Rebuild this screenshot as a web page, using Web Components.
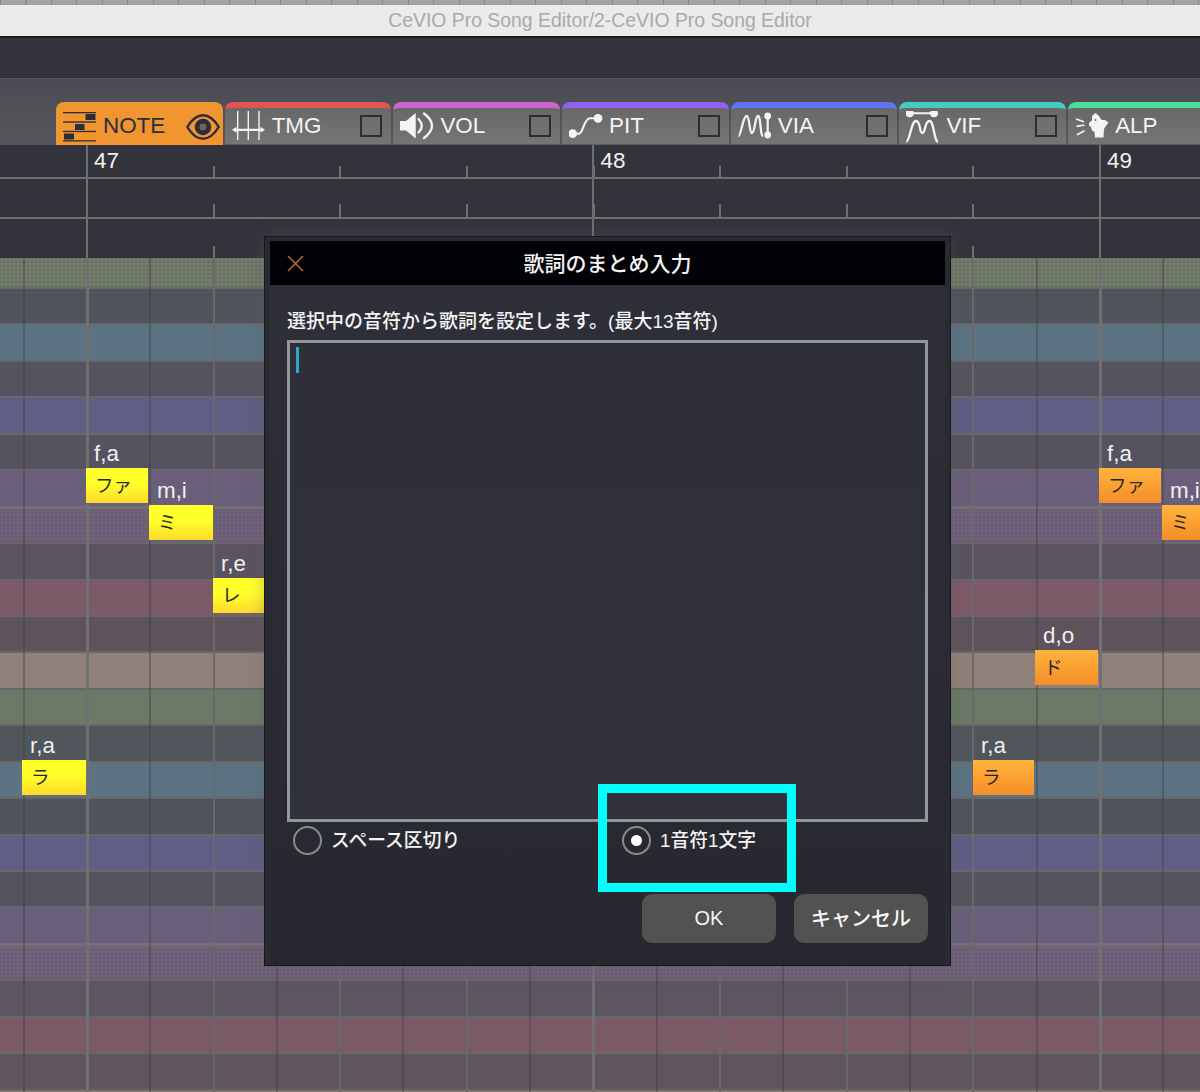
<!DOCTYPE html>
<html lang="ja">
<head>
<meta charset="utf-8">
<title>CeVIO Pro Song Editor</title>
<style>
html,body{margin:0;padding:0;background:#33333b}
</style>
</head>
<body>
<cv-app>
  <cv-titlebar slot="title">CeVIO Pro Song Editor/2-CeVIO Pro Song Editor</cv-titlebar>
  <cv-toolbar slot="toolbar">
    <cv-tab active label="NOTE">
      <svg slot="icon" width="34" height="32" viewBox="0 0 34 32" fill="#2c2c3c" stroke="none">
        <rect x="0" y="0" width="33" height="1.3"/><rect x="0" y="9.4" width="33" height="1.3"/><rect x="0" y="18.8" width="33" height="1.3"/><rect x="0" y="28.2" width="33" height="1.3"/>
        <rect x="22.5" y="2" width="10" height="6"/><rect x="12" y="12" width="9.5" height="6"/><rect x="1" y="21.5" width="10" height="6"/>
      </svg>
      <svg slot="end" width="34" height="26" viewBox="0 0 34 26">
        <path d="M1.3 13C7 3.5 13 1.3 17 1.3S27 3.5 32.7 13C27 22.5 21 24.7 17 24.7S7 22.5 1.3 13Z" fill="none" stroke="#2c2c3c" stroke-width="2.4"/>
        <circle cx="17" cy="13" r="5.8" fill="none" stroke="#2c2c3c" stroke-width="5"/>
        <circle cx="17" cy="13" r="3.2" fill="#6b6460"/>
      </svg>
    </cv-tab>
    <cv-tab color="#e25555" label="TMG">
      <svg slot="icon" width="34" height="32" viewBox="0 0 34 32" fill="#f4f4f4" stroke="#f4f4f4">
        <path d="M5.7 0V29M16.3 0V29M27 0V29" fill="none" stroke-width="1.4"/>
        <path d="M3 18.8H30" fill="none" stroke-width="2.2"/>
        <path d="M0 18.8L4.5 15.8V21.8ZM33 18.8L28.5 15.8V21.8Z" stroke="none"/>
      </svg>
    </cv-tab>
    <cv-tab color="#cc66cc" label="VOL">
      <svg slot="icon" width="34" height="32" viewBox="0 0 34 32" fill="none" stroke="#f4f4f4">
        <path d="M0 10H6L15.7 2V27.5L6 19.5H0Z" fill="#f4f4f4" stroke="none"/>
        <path d="M18.5 8Q25 14.7 18.5 21.5" stroke-width="2.4" stroke-linecap="round"/>
        <path d="M24 2.5Q40 14.7 24 27" stroke-width="2.4" stroke-linecap="round"/>
      </svg>
    </cv-tab>
    <cv-tab color="#9060f0" label="PIT">
      <svg slot="icon" width="34" height="32" viewBox="0 0 34 32" fill="#f4f4f4" stroke="none">
        <path d="M3.7 22.7H10C14 22.7 15 7.3 21 7.3H29" fill="none" stroke="#f4f4f4" stroke-width="2.1"/>
        <circle cx="3.7" cy="22.7" r="4.4"/><circle cx="29" cy="7.3" r="4.4"/>
      </svg>
    </cv-tab>
    <cv-tab color="#5f75f5" label="VIA">
      <svg slot="icon" width="34" height="32" viewBox="0 0 34 32" fill="#f4f4f4" stroke="none">
        <path d="M0.5 25C3 25 5 5 8.5 5C12 5 11 22 14 22C17 22 17 5 20 5C23 5 22 25 25 25" fill="none" stroke="#f4f4f4" stroke-width="2.3"/>
        <path d="M29.7 5V24" fill="none" stroke="#f4f4f4" stroke-width="2.2"/>
        <circle cx="29.7" cy="5" r="3.4"/><circle cx="29.7" cy="24" r="3.4"/>
      </svg>
    </cv-tab>
    <cv-tab color="#44ccc4" label="VIF">
      <svg slot="icon" width="34" height="32" viewBox="0 0 34 32" fill="#f4f4f4" stroke="none">
        <path d="M3.7 2.3H28" fill="none" stroke="#f4f4f4" stroke-width="2.1"/>
        <circle cx="3.7" cy="2.3" r="4"/><circle cx="28" cy="2.3" r="4"/>
        <path d="M0.3 30.5C4 30.5 5 10 10 10C15 10 13 22 16.3 22C20 22 18 10 23.7 10C28 10 28 30.5 32 30.5" fill="none" stroke="#f4f4f4" stroke-width="2.3"/>
      </svg>
    </cv-tab>
    <cv-tab color="#48dd99" label="ALP" nobox>
      <svg slot="icon" width="34" height="32" viewBox="0 0 34 32" fill="#f4f4f4" stroke="none">
        <path d="M1 8L9 10.7M1.5 15.3L9.5 14M2 23.7L9.5 19.7" fill="none" stroke="#f4f4f4" stroke-width="1.7"/>
        <path d="M14 12L17 9.5L17 5L20.5 2L24 5L26.5 9L30 9L33.5 11.5L30.5 15.5L29 18L28.5 26.5L20 26.5L19.5 21L17 19.5L16 16L14 14.5Z"/>
        <circle cx="20.5" cy="9" r="1" fill="#6f6f6f"/>
      </svg>
    </cv-tab>
  </cv-toolbar>
  <cv-ruler slot="ruler" bars="47,48,49"></cv-ruler>
  <cv-roll slot="roll">
    <cv-note x="86" y="468" w="62" lyric="ファ" phon="f,a" tone="yellow"></cv-note>
    <cv-note x="149" y="505" w="64" lyric="ミ" phon="m,i" tone="yellow"></cv-note>
    <cv-note x="213" y="578" w="63" lyric="レ" phon="r,e" tone="yellow"></cv-note>
    <cv-note x="22" y="760" w="64" lyric="ラ" phon="r,a" tone="yellow"></cv-note>
    <cv-note x="1035" y="650" w="63" lyric="ド" phon="d,o" tone="orange"></cv-note>
    <cv-note x="973" y="760" w="61" lyric="ラ" phon="r,a" tone="orange"></cv-note>
    <cv-note x="1099" y="468" w="62" lyric="ファ" phon="f,a" tone="orange"></cv-note>
    <cv-note x="1162" y="505" w="63" lyric="ミ" phon="m,i" tone="orange"></cv-note>
  </cv-roll>
  <cv-dialog slot="dialog" heading="歌詞のまとめ入力">
    <cv-lyric-field label="選択中の音符から歌詞を設定します。(最大13音符)"></cv-lyric-field>
    <cv-radio-row>
      <cv-radio>スペース区切り</cv-radio>
      <cv-radio checked>1音符1文字</cv-radio>
    </cv-radio-row>
    <cv-actions>
      <cv-button>OK</cv-button>
      <cv-button label-up>キャンセル</cv-button>
    </cv-actions>
  </cv-dialog>
  <cv-highlight slot="dialog"></cv-highlight>
</cv-app>

<script>
const SANS = '"Liberation Sans","Noto Sans CJK JP",sans-serif';
class Base extends HTMLElement {
  constructor(){ super(); this.attachShadow({mode:'open'}); }
  render(html){ this.shadowRoot.innerHTML = html; }
}
customElements.define('cv-app', class extends Base {
  connectedCallback(){ this.render(`<style>
    :host{display:flex;flex-direction:column;position:relative;width:1200px;height:1092px;overflow:hidden;background:#33333b;font-family:${SANS}}
    .strip{height:5px;flex:none;background:repeating-linear-gradient(90deg,#8b8b8b 0 1px,#a3a3a3 1px 25.5px)}
    .band{height:40px;flex:none;background:#33333b}
  </style>
  <div class="strip"></div>
  <slot name="title"></slot>
  <div class="band"></div>
  <slot name="toolbar"></slot>
  <slot name="ruler"></slot>
  <slot name="roll"></slot>
  <slot name="dialog"></slot>`); }
});
customElements.define('cv-titlebar', class extends Base {
  connectedCallback(){ this.render(`<style>
    :host{display:flex;flex:none;align-items:center;justify-content:center;box-sizing:border-box;height:33px;padding-top:0;background:#ebebeb;border-bottom:2px solid #1c1c20;color:#a9a9a9;font:19.4px ${SANS}}
  </style><slot></slot>`); }
});
customElements.define('cv-toolbar', class extends Base {
  connectedCallback(){ this.render(`<style>
    :host{display:flex;flex:none;box-sizing:border-box;height:67px;padding:23px 0 0 56px;gap:2px;overflow:hidden;background:linear-gradient(#4b4c53,#56575d);border-top:1px solid #54555c}
  </style><slot></slot>`); }
});
customElements.define('cv-tab', class extends Base {
  connectedCallback(){
    const active=this.hasAttribute('active'), color=this.getAttribute('color')||'#f0952f';
    const nobox=this.hasAttribute('nobox');
    this.render(`<style>
      :host{display:flex;flex:none;flex-direction:column;box-sizing:border-box;width:166.7px;height:44px;border-radius:8px 8px 0 0;overflow:hidden;background:${active?'#f0952f':'linear-gradient(#686868,#757575)'};border-top:${active?'0':'6px solid '+color};color:${active?'#2c2c3c':'#f4f4f4'};${active?'':'border-bottom:2px solid #5d5d60'}}
      .in{flex:1;min-height:0;display:flex;align-items:center;padding-left:7px;font:22.4px ${SANS}}
      .ic{flex:none;width:34px;height:32px;display:block;margin-right:6px;${active?'margin-top:7px;margin-bottom:-1px':'margin-top:1px'}}
      .lb{flex:1;white-space:nowrap;${active?'margin-top:4px':'margin-top:-1px'}}
      .box{flex:none;box-sizing:border-box;width:22px;height:22px;margin-right:9px;border:2px solid #2c2c34;background:#707070}
      .end{flex:none;margin-right:3px;display:flex;margin-top:6px}
    </style>
    <div class="in">
      <div class="ic"><slot name="icon"></slot></div>
      <span class="lb">${this.getAttribute('label')}</span>
      ${active?'<span class="end"><slot name="end"></slot></span>':(nobox?'':'<span class="box"></span>')}
    </div>`);
  }
});
const LINE='#6f6f70';
const majors=(c,w)=>`repeating-linear-gradient(90deg,${c} 86px,${c} ${86+w}px,transparent ${86+w}px,transparent 592.5px)`;
const beats=(c,w)=>`repeating-linear-gradient(90deg,${c} 86.2px,${c} ${86.2+w}px,transparent ${86.2+w}px,transparent 212.8px)`;
customElements.define('cv-ruler', class extends Base {
  connectedCallback(){
    const bars=this.getAttribute('bars').split(',');
    this.render(`<style>
      :host{display:block;flex:none;height:113px;background:#33333b;color:#f2f2f2}
      .r{box-sizing:border-box;border-bottom:2px solid ${LINE};background-image:${majors(LINE,2)},${beats(LINE,2)};background-repeat:no-repeat;background-position:0 0,0 100%}
      .a{height:34px;display:grid;grid-template-columns:repeat(3,506.5px);padding-left:87px;font:22.4px ${SANS};background-size:100% 100%,100% 11px}
      .a span{padding:3px 0 0 7px;line-height:26px}
      .b{height:40px;background-size:100% 100%,100% 13px}
      .c{height:39px;border-bottom:0;background-size:100% 100%,100% 12px}
    </style>
    <div class="r a">${bars.map(b=>`<span>${b}</span>`).join('')}</div>
    <div class="r b"></div>
    <div class="r c"></div>`);
  }
});
const ROWS=['#6b7563','#50565c','#5b7382','#53545f','#5f5e84','#55535f','#6a5f7a','#6a5e78','#5a5360','#7b5a67','#5e535a','#90807a','#6a7a66','#50565c','#5b7382','#50525c','#5f5e84','#55535f','#695f7a','#6a5e78','#5d5660','#7b5a67','#5e555d','#90807a'];
const DOTS={0:'rgba(220,230,200,.13)',7:'rgba(210,150,120,.13)',19:'rgba(210,150,120,.13)',1:'rgba(30,40,50,.1)',9:'rgba(200,90,110,.09)'};
customElements.define('cv-roll', class extends Base {
  connectedCallback(){
    this.render(`<style>
      :host{display:block;position:relative;flex:1;min-height:0;overflow:hidden}
      .rows{display:flex;flex-direction:column}
      .row{flex:none;box-sizing:border-box;height:36.45px;border-top:2px solid #68686a;background-size:4px 4px}
      .row:first-child{height:29px;border-top:0}
      .row.oct{border-top-width:3px;border-top-color:#727274}
      .grid{position:absolute;inset:0;pointer-events:none;background-image:${majors('#707072',3)},${beats('#69696b',2)},repeating-linear-gradient(90deg,rgba(62,62,66,.42) 22.7px,rgba(62,62,66,.42) 24.7px,transparent 24.7px,transparent 149.3px)}
    </style>
    <div class="rows">${ROWS.map((c,i)=>`<div class="row${(i==7||i==19)?' oct':''}" style="background-color:${c};${DOTS[i]?`background-image:radial-gradient(circle at 2px 2px,${DOTS[i]} .7px,transparent 1px)`:''}"></div>`).join('')}</div>
    <div class="grid"></div>
    <slot></slot>`);
  }
});
customElements.define('cv-note', class extends Base {
  connectedCallback(){
    const g=this.getAttribute('tone')==='yellow'
      ? 'linear-gradient(#ffff2a 45%,#fdd92b)'
      : 'linear-gradient(#ffb43c,#f58d28)';
    this.render(`<style>
      :host{display:block;position:absolute;left:${this.getAttribute('x')}px;top:${this.getAttribute('y')-258}px;width:${this.getAttribute('w')}px;height:35px;background:${g};color:#26262c;font:18.5px ${SANS}}
      .p{position:absolute;left:8px;bottom:100%;margin-bottom:-1px;color:#f0f0f0;font:22.4px/30px ${SANS};white-space:nowrap}
      .l{display:block;padding:4px 0 0 9px;line-height:27px;white-space:nowrap}
    </style><span class="p">${this.getAttribute('phon')}</span><span class="l">${this.getAttribute('lyric')}</span>`);
  }
});
customElements.define('cv-dialog', class extends Base {
  connectedCallback(){
    this.render(`<style>
      :host{display:flex;flex-direction:column;position:absolute;left:264px;top:236px;box-sizing:border-box;width:687px;height:730px;padding:4px 5px 0;background:#2a2b32;border:1px solid #17181c;box-shadow:0 0 16px rgba(95,95,100,.35);color:#f4f4f4;font-family:${SANS}}
      .head{flex:none;position:relative;height:44px;display:flex;align-items:center;justify-content:center;background:#020207;font-size:21px;font-weight:500;padding-bottom:3px;box-sizing:border-box}
      .x{position:absolute;left:17px;top:14px;display:block}
      .body{flex:1;min-height:0;display:flex;flex-direction:column;padding:21px 17px 0;background:linear-gradient(#2e2f38,#27282f)}
    </style>
    <div class="head">
      <svg class="x" width="17" height="17" viewBox="0 0 17 17"><path d="M1 1L16 16M16 1L1 16" stroke="#b8623e" stroke-width="1.6" fill="none"/></svg>
      <span>${this.getAttribute('heading')}</span>
    </div>
    <div class="body"><slot></slot></div>`);
  }
});
customElements.define('cv-lyric-field', class extends Base {
  connectedCallback(){
    this.render(`<style>
      :host{display:block;flex:none}
      .t{display:block;box-sizing:border-box;height:28px;padding-top:2px;line-height:28px;font-size:19px;font-weight:500;white-space:nowrap;margin-bottom:6px}
      .a{box-sizing:border-box;height:482px;border:3px solid #8f9799;background:linear-gradient(#2e2f38,#30313a);padding:4px 0 0 6px}
      .c{display:block;width:3px;height:26px;background:#2fa8c8}
    </style>
    <label class="t">${this.getAttribute('label')}</label>
    <div class="a"><span class="c"></span></div>`);
  }
});
customElements.define('cv-radio-row', class extends Base {
  connectedCallback(){
    this.render(`<style>
      :host{display:grid;flex:none;grid-template-columns:329px 1fr;height:30px;margin-top:3px;padding-left:6px}
    </style><slot></slot>`);
  }
});
customElements.define('cv-radio', class extends Base {
  connectedCallback(){
    const on=this.hasAttribute('checked');
    this.render(`<style>
      :host{display:flex;align-items:center;gap:9px;font-size:18.8px;font-weight:500}
      .o{flex:none;box-sizing:border-box;width:29px;height:29px;border-radius:50%;border:2px solid #8a8a8a;display:flex;align-items:center;justify-content:center}
      .d{width:11px;height:11px;border-radius:50%;background:#fff}
      .t{white-space:nowrap;margin-top:-3px}
    </style><span class="o">${on?'<span class="d"></span>':''}</span><span class="t"><slot></slot></span>`);
  }
});
customElements.define('cv-actions', class extends Base {
  connectedCallback(){
    this.render(`<style>
      :host{display:flex;flex:none;justify-content:flex-end;gap:18px;margin-top:39px}
    </style><slot></slot>`);
  }
});
customElements.define('cv-button', class extends Base {
  connectedCallback(){
    const up=this.hasAttribute('label-up');
    this.render(`<style>
      :host{display:flex;align-items:center;justify-content:center;box-sizing:border-box;width:134px;height:49px;border-radius:10px;background:#525252;color:#f6f6f6;font-size:20px;font-weight:500;${up?'padding-bottom:3px':''}}
    </style><slot></slot>`);
  }
});
customElements.define('cv-highlight', class extends Base {
  connectedCallback(){
    this.render(`<style>
      :host{display:block;position:absolute;left:598px;top:784px;box-sizing:border-box;width:198px;height:108px;border:9px solid #00ffff;pointer-events:none}
    </style>`);
  }
});
</script>
</body>
</html>
